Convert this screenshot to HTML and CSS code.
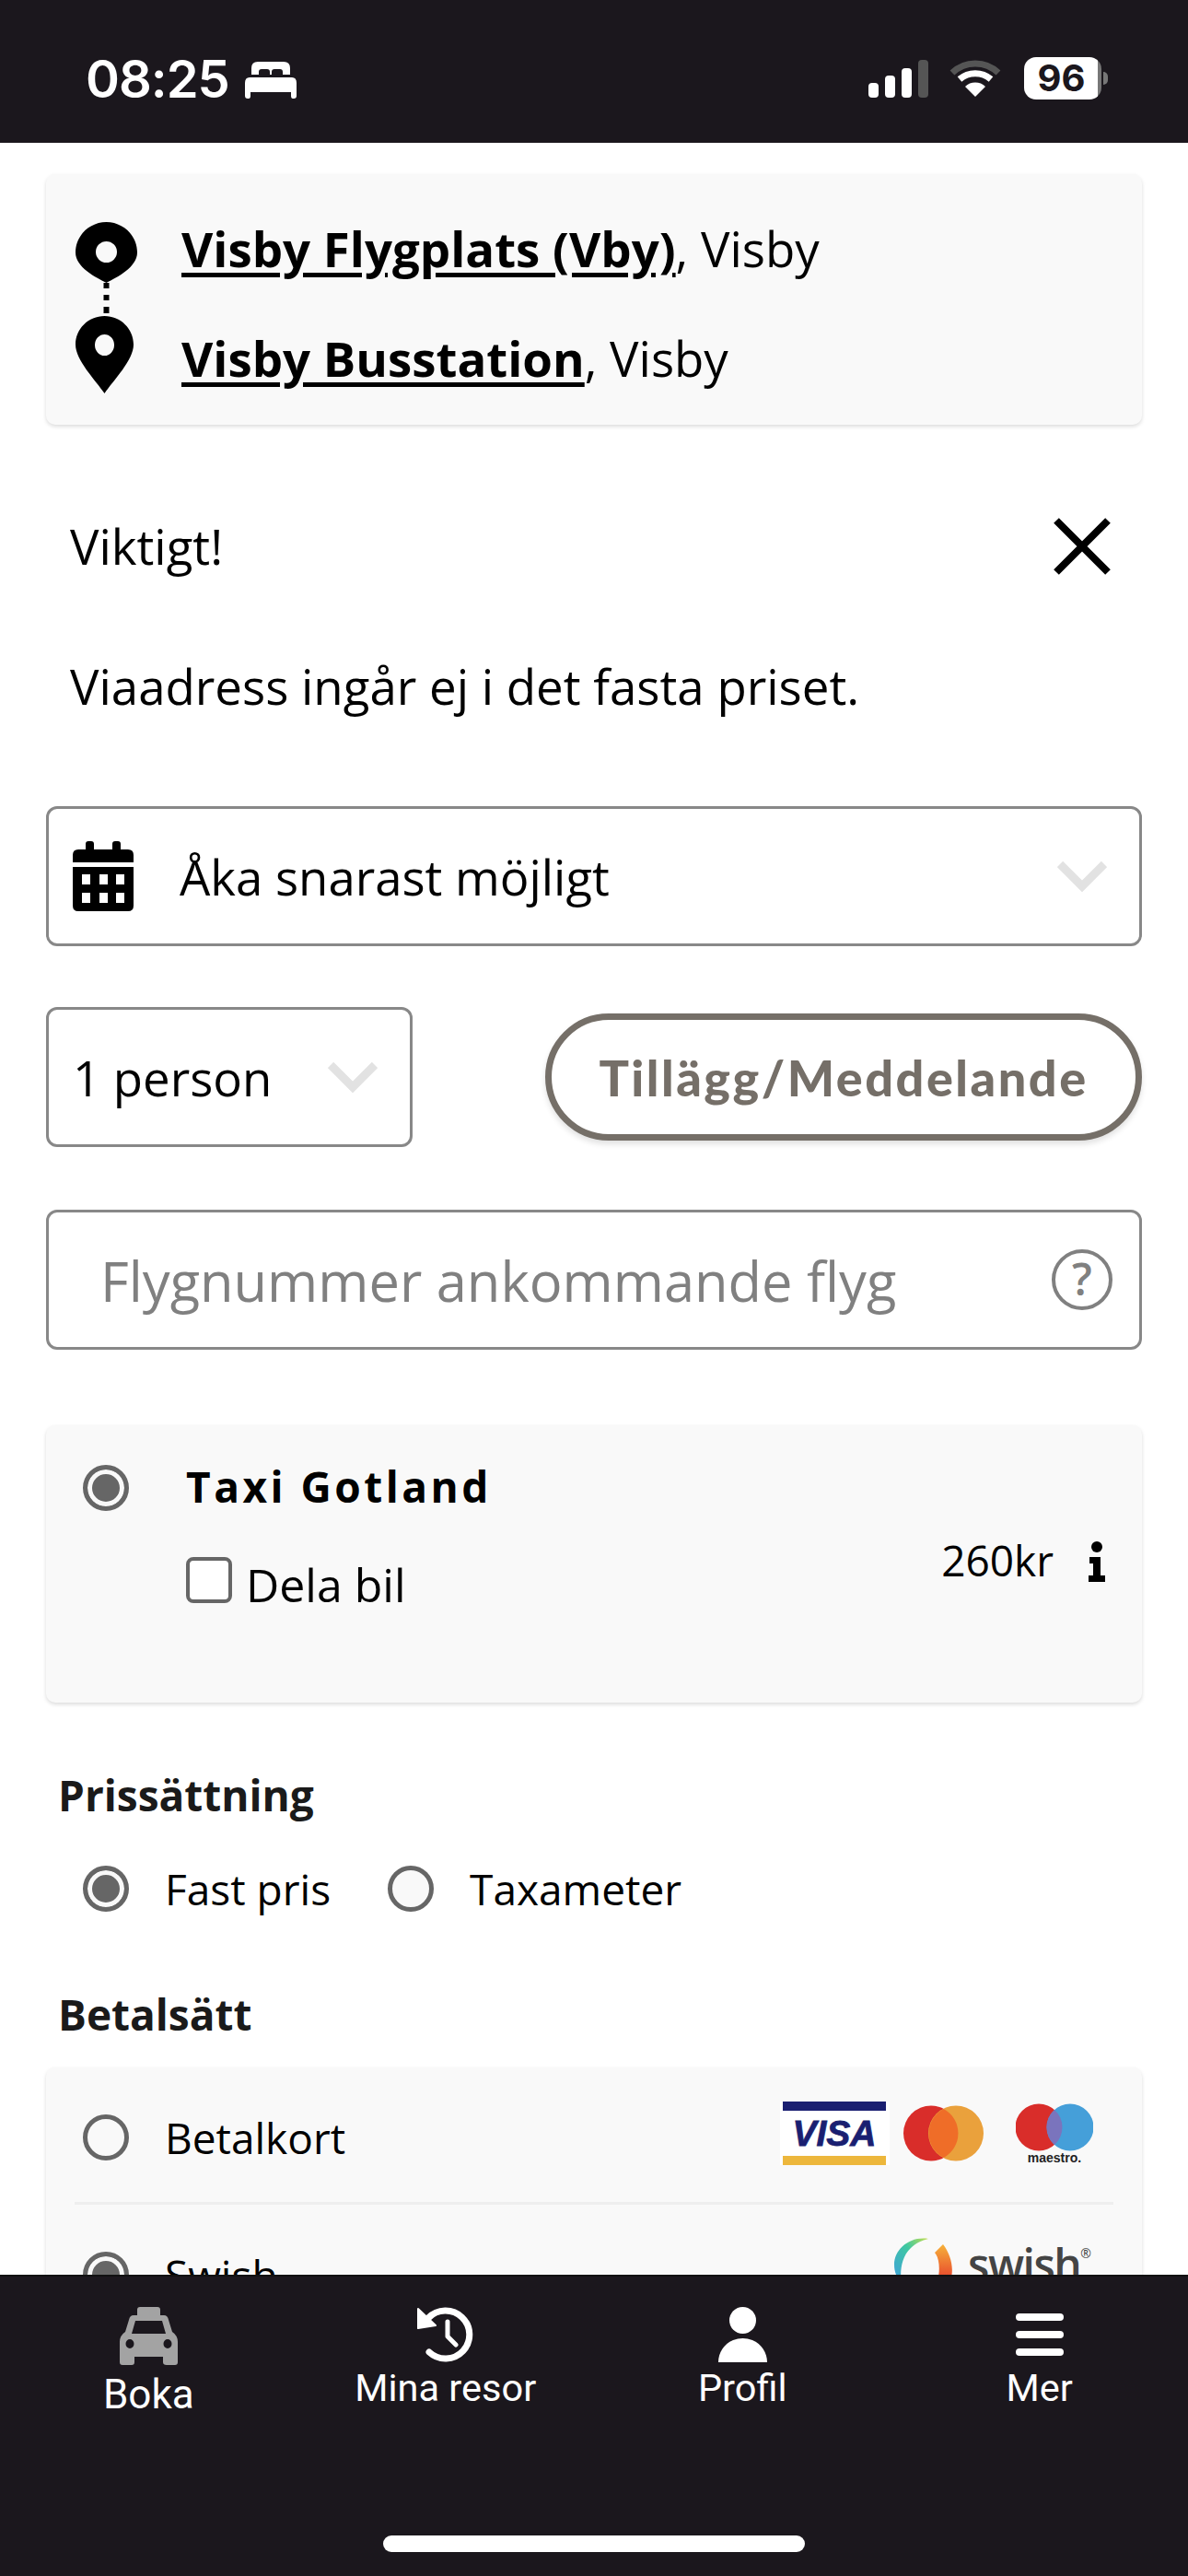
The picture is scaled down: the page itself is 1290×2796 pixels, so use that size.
FILE: index.html
```html
<!DOCTYPE html>
<html lang="sv">
<head>
<meta charset="utf-8">
<title>Boka</title>
<link rel="stylesheet" href="styles.css">
</head>
<body>
<div class="phone">
  <header class="status">
    <div class="status-left">
      <span class="time">08:25</span>
      <svg class="bed" viewBox="0 0 56 40"><path d="M7 7Q7 0 14 0H42Q49 0 49 7V14H41V11Q41 8 38 8H32Q29 8 29 11V14H27V11Q27 8 24 8H18Q15 8 15 11V14H7Z M5 17H51Q56 17 56 23V37Q56 40 53 40H52Q50 40 50 37V33H6V37Q6 40 4 40H3Q0 40 0 37V23Q0 17 5 17Z" fill="#fff"/></svg>
    </div>
    <div class="status-right">
      <div class="signal"><i class="b1"></i><i class="b2"></i><i class="b3"></i><i class="b4"></i></div>
      <svg class="wifi" viewBox="0 0 56 42"><path d="M3 15A36 36 0 0 1 53 15" fill="none" stroke="#555" stroke-width="7"/><path d="M11 22A26 26 0 0 1 45 22" fill="none" stroke="#fff" stroke-width="7"/><path d="M28 41L17 30A16 16 0 0 1 39 30Z" fill="#fff"/></svg>
      <div class="battery"><span class="battery-body">96</span><span class="battery-nub"></span></div>
    </div>
  </header>

  <main class="content">
    <section class="card route">
      <svg class="route-pins" viewBox="0 0 67 186">
        <path fill-rule="evenodd" d="M33.500 0C52 0 67 15 67 33C67 49 45 60 33.500 66C22 60 0 49 0 33C0 15 15 0 33.500 0ZM33.500 21A11.500 11.500 0 1 0 33.500 44A11.500 11.500 0 1 0 33.500 21Z"/>
        <path d="M30.500 66h6v6h-6zM30.500 79h6v6h-6zM30.500 92h6v7h-6z"/>
        <path fill-rule="evenodd" d="M31.500 102C49 102 63 116 63 133C63 150 41 172 31.500 186C22 172 0 150 0 133C0 116 14 102 31.500 102ZM31.500 122A10.500 11.500 0 1 0 31.500 145A10.500 11.500 0 1 0 31.500 122Z"/>
      </svg>
      <div class="route-text">
        <p class="route-line"><a class="place">Visby Flygplats (Vby)</a>, Visby</p>
        <p class="route-line"><a class="place">Visby Busstation</a>, Visby</p>
      </div>
    </section>

    <section class="notice">
      <div class="notice-head">
        <span>Viktigt!</span>
        <svg class="close" viewBox="0 0 66 62"><path d="M5 3L61 59M61 3L5 59" stroke="#000" stroke-width="8" fill="none"/></svg>
      </div>
      <p class="notice-text">Viaadress ingår ej i det fasta priset.</p>
    </section>

    <div class="field when">
      <svg class="calendar" viewBox="0 0 66 76"><path fill-rule="evenodd" d="M14 3Q14 0 17 0H20Q23 0 23 3V9H43V3Q43 0 46 0H49Q52 0 52 3V9H60Q66 9 66 15V23H0V15Q0 9 6 9H14ZM0 28H66V70Q66 76 60 76H6Q0 76 0 70ZM10 36V47H19V36ZM29 36V47H38V36ZM47 36V47H56V36ZM10 56V67H19V56ZM29 56V67H38V56ZM47 56V67H56V56Z"/></svg>
      <span class="field-value">Åka snarast möjligt</span>
      <svg class="chevron" viewBox="0 0 54 34"><path d="M3 4L27 28L51 4" fill="none" stroke="#e2e2e2" stroke-width="9"/></svg>
    </div>

    <div class="row-person">
      <div class="field person">
        <span class="field-value">1 person</span>
        <svg class="chevron" viewBox="0 0 54 34"><path d="M3 4L27 28L51 4" fill="none" stroke="#e2e2e2" stroke-width="9"/></svg>
      </div>
      <button class="addon">Tillägg/Meddelande</button>
    </div>

    <div class="field flight">
      <span class="placeholder">Flygnummer ankommande flyg</span>
      <span class="help">?</span>
    </div>

    <section class="card taxi">
      <span class="radio on"></span>
      <div class="taxi-main">
        <div class="taxi-name">Taxi Gotland</div>
        <label class="share"><span class="checkbox"></span>Dela bil</label>
      </div>
      <div class="taxi-price">
        <span>260kr</span>
        <svg class="info" viewBox="0 0 20 44"><circle cx="10" cy="6" r="6"/><path d="M2 17H14V37H19V44H1V37H6V24H2Z"/></svg>
      </div>
    </section>

    <h2 class="heading pricing-h">Prissättning</h2>
    <div class="pricing">
      <label class="opt"><span class="radio on"></span>Fast pris</label>
      <label class="opt"><span class="radio"></span>Taxameter</label>
    </div>

    <h2 class="heading pay-h">Betalsätt</h2>
    <section class="card pay">
      <div class="pay-row first">
        <label class="opt"><span class="radio"></span>Betalkort</label>
        <div class="logos">
          <svg class="visa" viewBox="0 0 119 69"><rect width="119" height="69" fill="#fff"/><rect x="3" width="112" height="10" fill="#1a1f71"/><rect x="3" y="59" width="112" height="10" fill="#edb73c"/><text x="59" y="48" class="visa-text" text-anchor="middle">VISA</text></svg>
          <svg class="mc" viewBox="0 0 87 61"><circle cx="30" cy="30.500" r="30" fill="#d92d2a"/><circle cx="57" cy="30.500" r="30" fill="#eaa13c"/><path d="M43.500 4a30 30 0 0 1 0 53a30 30 0 0 1 0-53Z" fill="#ef6d28"/></svg>
          <svg class="maestro" viewBox="0 0 84 66"><circle cx="25" cy="26" r="25.500" fill="#d92d2a"/><circle cx="59" cy="26" r="25.500" fill="#459fd9"/><path d="M42 7a25.500 25.500 0 0 1 0 38a25.500 25.500 0 0 1 0-38Z" fill="#7a74bd"/><text x="42" y="64" class="maestro-text" text-anchor="middle">maestro.</text></svg>
        </div>
      </div>
      <div class="pay-row second">
        <label class="opt"><span class="radio on"></span>Swish</label>
        <div class="swish">
          <svg class="swish-mark" viewBox="0 0 64 64"><defs><linearGradient id="sw1" x1="0" y1="1" x2="1" y2="0"><stop offset="0" stop-color="#3f9fe0"/><stop offset=".6" stop-color="#3fc8a0"/><stop offset="1" stop-color="#c4de50"/></linearGradient><linearGradient id="sw2" x1="0" y1="0" x2="0" y2="1"><stop offset="0" stop-color="#f6b23a"/><stop offset="1" stop-color="#e6392b"/></linearGradient></defs><path d="M37 2C16-1 0 14 0 30C0 38 3 45 8 50C6 40 7 22 18 12C24 6 30 4 37 2Z" fill="url(#sw1)"/><path d="M53 8L44 17C50 24 50 40 46 50H60C66 36 62 20 53 8Z" fill="url(#sw2)"/></svg>
          <span class="swish-word">swish</span><span class="swish-r">®</span>
        </div>
      </div>
    </section>
  </main>

  <nav class="tabs">
    <a class="tab boka">
      <svg class="tab-icon taxi-icon" viewBox="0 0 63 63"><path fill-rule="evenodd" fill="#a3a3a3" d="M22 0H41Q44 0 44 3V9H48Q52 9 53 14L57 27Q63 31 63 38V60Q63 63 60 63H51Q47 63 47 60V54H16V60Q16 63 13 63H3Q0 63 0 60V38Q0 31 6 27L10 14Q11 9 15 9H19V3Q19 0 22 0ZM17 15L13 29H50L46 15ZM11 35A4.500 5 0 1 0 11 45A4.500 5 0 1 0 11 35ZM52 35A4.500 5 0 1 0 52 45A4.500 5 0 1 0 52 35Z"/></svg>
      <span>Boka</span>
    </a>
    <a class="tab">
      <svg class="tab-icon" viewBox="0 0 62 60"><path d="M12 12A26 26 0 1 1 13 49" fill="none" stroke="#fff" stroke-width="7" stroke-linecap="round"/><path d="M1 2L20 20L1 23Z" fill="#fff" stroke="#fff" stroke-width="2" stroke-linejoin="round"/><path d="M33 16V32L42 41" fill="none" stroke="#fff" stroke-width="5" stroke-linecap="round" stroke-linejoin="round"/></svg>
      <span>Mina resor</span>
    </a>
    <a class="tab">
      <svg class="tab-icon" viewBox="0 0 53 60"><circle cx="26.500" cy="14.500" r="14.500" fill="#fff"/><path d="M16 36Q26.500 32 37 36C47 40 53 50 53 60H0C0 50 6 40 16 36Z" fill="#fff"/></svg>
      <span>Profil</span>
    </a>
    <a class="tab">
      <svg class="tab-icon" viewBox="0 0 52 60"><rect y="7" width="52" height="8" rx="4" fill="#fff"/><rect y="26" width="52" height="8" rx="4" fill="#fff"/><rect y="45" width="52" height="8" rx="4" fill="#fff"/></svg>
      <span>Mer</span>
    </a>
    <div class="home-bar"></div>
  </nav>
</div>
</body>
</html>
```

FILE: styles.css
```css
* { box-sizing: border-box; }
html, body { margin: 0; padding: 0; background: #fff; }
body { font-family: "Open Sans", sans-serif; color: #000; }
p, h2 { margin: 0; }

.phone { width: 1290px; height: 2796px; display: flex; flex-direction: column; overflow: hidden; }

/* status bar */
.status { height: 155px; flex: none; background: #1b171d; display: flex; justify-content: space-between; padding: 62px 87px 0 93px; }
.status-left { display: flex; align-items: flex-start; gap: 17px; }
.time { font-family: Inter, sans-serif; font-weight: 600; font-size: 56px; line-height: 48px; color: #fff; letter-spacing: -1px; }
.bed { width: 56px; height: 40px; margin-top: 5px; }
.status-right { display: flex; align-items: flex-start; }
.signal { display: flex; align-items: flex-end; gap: 7px; height: 41px; margin-top: 3px; }
.signal i { display: block; width: 11px; background: #fff; border-radius: 4px; }
.signal .b1 { height: 16px; }
.signal .b2 { height: 24px; }
.signal .b3 { height: 32px; }
.signal .b4 { height: 41px; background: #555; }
.wifi { width: 58px; height: 42px; margin: 2px 24px 0 22px; }
.battery { display: flex; align-items: center; }
.battery-body { width: 84px; height: 46px; border-radius: 13px; background: linear-gradient(90deg, #fff 95%, #777 95%); color: #1b171d; font-family: Inter, sans-serif; font-weight: 700; font-size: 40px; line-height: 46px; text-align: center; padding-right: 3px; }
.battery-nub { width: 5px; height: 14px; margin-left: 2px; background: #777; border-radius: 0 5px 5px 0; }

/* content */
.content { flex: 1; min-height: 0; overflow: hidden; padding: 34px 50px 0 50px; }
.card { background: #f9f9f9; border-radius: 10px; box-shadow: 0 2px 4px rgba(0,0,0,.14); }

.route { height: 272px; padding: 52px 0 0 32px; display: flex; }
.route-pins { width: 67px; height: 186px; flex: none; }
.route-text { margin: -31px 0 0 48px; }
.route-line { font-size: 52.800px; line-height: 119px; white-space: nowrap; }
.place { font-weight: 700; text-decoration: underline; text-decoration-thickness: 5px; text-underline-offset: 6px; }

.notice { margin-top: 101px; padding-left: 26px; font-size: 52.800px; line-height: 62px; }
.notice-head { display: flex; justify-content: space-between; padding-right: 32px; }
.close { width: 66px; height: 62px; }
.notice-text { margin-top: 90px; }

.field { border: 3px solid #888; border-radius: 12px; display: flex; align-items: center; background: #fff; }
.field-value { font-size: 52.700px; }
.chevron { width: 54px; height: 34px; flex: none; }

.when { height: 152px; margin-top: 99px; padding: 0 35px 0 26px; }
.calendar { width: 66px; height: 76px; flex: none; margin-right: 50px; }
.when .field-value { flex: 1; }

.row-person { display: flex; justify-content: space-between; align-items: center; margin-top: 66px; height: 152px; }
.person { width: 398px; height: 152px; padding: 0 35px 0 26px; justify-content: space-between; }
.addon { width: 648px; height: 138px; background: #fff; border: 7px solid #756f68; border-radius: 70px; color: #756f68; font-family: Lato, sans-serif; font-weight: 900; font-size: 54px; letter-spacing: 2.500px; box-shadow: 0 4px 6px rgba(0,0,0,.12); padding: 0; }

.flight { height: 152px; margin-top: 68px; padding: 0 29px 0 56px; justify-content: space-between; }
.placeholder { font-size: 59.600px; color: #808080; }
.help { width: 66px; height: 66px; border: 4px solid #808080; border-radius: 50%; color: #808080; font-size: 48px; font-weight: 600; line-height: 56px; text-align: center; }

.radio { display: inline-block; flex: none; width: 50px; height: 50px; border-radius: 50%; border: 5px solid #666; background: #f9f9f9; }
.radio.on { background: #666; box-shadow: inset 0 0 0 5px #f9f9f9; }

.taxi { height: 301px; margin-top: 82px; padding: 43px 39px 0 40px; display: flex; align-items: flex-start; }
.taxi-main { margin-left: 62px; flex: 1; }
.taxi-name { font-weight: 700; font-size: 46px; letter-spacing: 3.500px; line-height: 56px; margin-top: -5px; }
.share { display: flex; align-items: center; gap: 15px; font-size: 50px; line-height: 60px; margin-top: 49px; }
.checkbox { width: 50px; height: 50px; border: 4px solid #666; border-radius: 8px; background: #fff; margin-top: -10px; }
.taxi-price { display: flex; align-items: center; gap: 37px; font-size: 46px; margin-top: 72px; }
.info { width: 20px; height: 44px; margin-top: 4px; }

.heading { font-size: 46px; font-weight: 700; color: #1a1a1a; line-height: 60px; padding-left: 13px; }
.pricing-h { margin-top: 70px; }
.pricing { display: flex; gap: 62px; padding-left: 40px; margin-top: 42px; }
.opt { display: flex; align-items: center; gap: 39px; font-size: 46px; line-height: 60px; }
.pay-h { margin-top: 76px; }

.pay { margin-top: 28px; height: 400px; padding: 0 31px; }
.pay-row { display: flex; justify-content: space-between; padding-left: 9px; }
.first { height: 149px; padding-top: 5px; align-items: center; border-bottom: 3px solid #eee; }
.second { height: 120px; padding-top: 31px; }
.logos { display: flex; align-items: center; margin-right: 22px; margin-top: -8px; }
.visa { width: 119px; height: 69px; margin-right: 15px; }
.mc { width: 87px; height: 61px; margin-right: 35px; }
.maestro { width: 84px; height: 66px; }
.visa-text { font-family: "Liberation Sans", sans-serif; font-style: italic; font-weight: 700; font-size: 39px; fill: #1a1f71; stroke: #1a1f71; stroke-width: .8px; }
.maestro-text { font-family: "Liberation Sans", sans-serif; font-size: 14px; font-weight: 700; fill: #222; }
.swish { display: flex; align-items: flex-start; color: #444; margin-top: 4px; margin-right: 24px; }
.swish-mark { width: 64px; height: 64px; margin-right: 16px; }
.swish-word { font-family: "Open Sans", sans-serif; font-weight: 600; font-size: 48px; letter-spacing: -1.500px; line-height: 66px; margin-top: -3px; }
.swish-r { font-size: 14px; line-height: 20px; margin-top: 8px; }

/* bottom nav */
.tabs { position: relative; flex: none; height: 327px; background: #1b171d; display: grid; grid-template-columns: repeat(4, 1fr); align-items: start; border-top: 2px solid #111; }
.tab { display: flex; flex-direction: column; align-items: center; padding-top: 33px; color: #fff; font-family: Roboto, sans-serif; font-size: 41.500px; line-height: 48px; }
.tab-icon { height: 60px; display: block; margin-bottom: 4px; }
.boka { font-size: 44px; }
.boka .tab-icon { height: 63px; margin-bottom: 8px; }
.home-bar { position: absolute; left: 416px; bottom: 26px; width: 458px; height: 18px; background: #fff; border-radius: 9px; }
```
